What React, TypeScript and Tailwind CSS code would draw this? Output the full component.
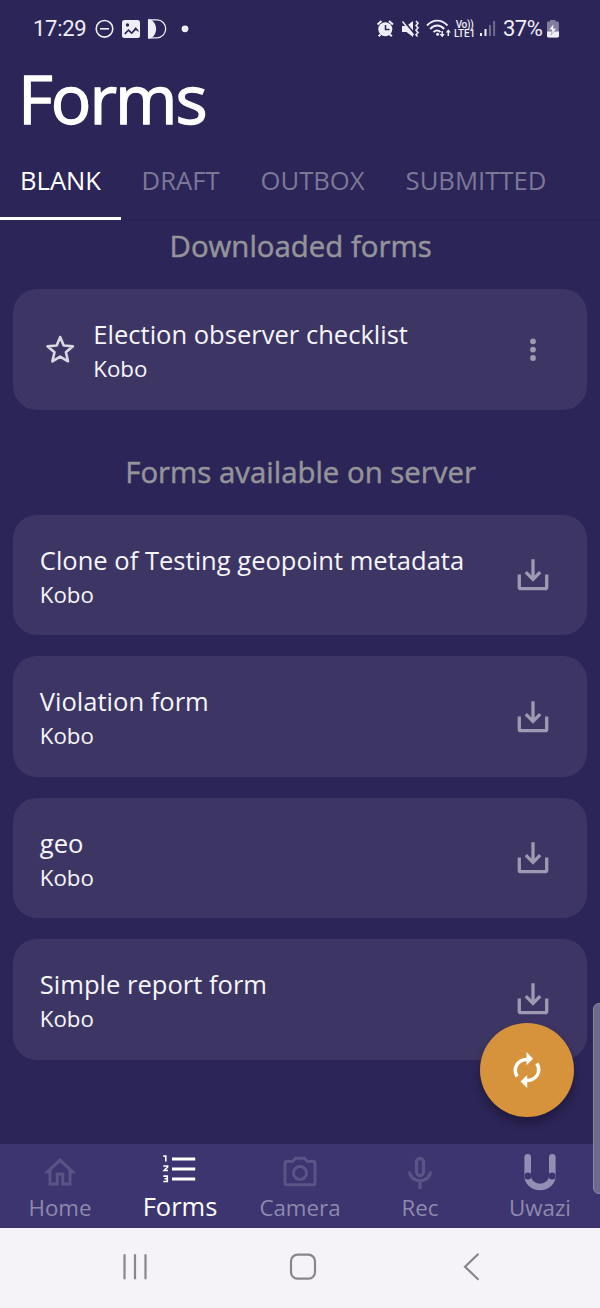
import type { ReactNode } from "react";

const tabs = [
  { label: "BLANK", active: true },
  { label: "DRAFT" },
  { label: "OUTBOX" },
  { label: "SUBMITTED" },
];

const serverForms = ["Clone of Testing geopoint metadata", "Violation form", "geo", "Simple report form"];

function StatusBar() {
  return (
    <div className="flex h-[56px] items-start justify-between pl-[33px] pr-[40px] pt-[17px] font-['Roboto',sans-serif] text-[#efedf6]">
      <div className="flex h-6 items-center">
        <span className="w-[62px] text-[22px] leading-6 tracking-[-0.3px]">17:29</span>
        <svg width="96" height="24" viewBox="95 17 96 24" fill="none">
          <circle cx="104.5" cy="28.8" r="8.3" stroke="#efedf6" strokeWidth="1.6" />
          <path d="M100 28.8h9" stroke="#efedf6" strokeWidth="1.6" />
          <rect x="122" y="20" width="18" height="18" rx="2.5" fill="#efedf6" />
          <path d="M124 33.5l4.5-4.5 3.2 3 4-5 2.8 3.6v1.4l-2.6-2-4.2 4.2-3.2-3-3 3.2z" fill="#2c2558" />
          <circle cx="127.5" cy="25" r="1.7" fill="#2c2558" />
          <path d="M148.6 19.8h8.5a8.6 9 0 0 1 0 18h-8.5z" stroke="#efedf6" strokeWidth="1.3" />
          <path d="M148 19.4h2.5c7.5 4 7.5 15 0 19H148z" fill="#efedf6" />
          <circle cx="185" cy="28.8" r="3.4" fill="#efedf6" />
        </svg>
      </div>
      <div className="flex h-6 items-center">
        <svg className="shrink-0" width="76" height="24" viewBox="376 17 76 24" fill="none">
          <circle cx="385.3" cy="29.3" r="7" fill="#efedf6" />
          <path d="M377.5 24.5l4-3.5M393 24.5l-4-3.5M380.5 34.5l-1.8 1.8M390 34.5l1.8 1.8" stroke="#efedf6" strokeWidth="2" />
          <path d="M385.5 25v4.6h4" stroke="#2c2558" strokeWidth="1.5" />
          <path d="M402 26h4.5l6.500-5v16l-6.500-5H402z" fill="#efedf6" />
          <path d="M403 19.8l11 13.5" stroke="#2c2558" strokeWidth="2" />
          <path d="M402.5 21.5l11 13.5" stroke="#efedf6" strokeWidth="1.5" />
          <path d="M416 21l2 2.2-2 2.2 2 2.4-2 2.4 2 2.4-2 2.2 1.5 1.7" stroke="#efedf6" strokeWidth="1.6" />
          <path d="M427 25.5c6-6.5 14.5-6.5 20.5 0M430.2 29c4.2-4.6 9.8-4.6 14 0M433.5 32.2c2.2-2.2 5-2.2 7 0" stroke="#efedf6" strokeWidth="1.9" />
          <circle cx="437.6" cy="34.2" r="1.5" fill="#efedf6" />
          <path d="M442.2 31v4.5M448.3 36v-4.5" stroke="#efedf6" strokeWidth="1.5" />
          <path d="M439.6 34h5.2l-2.6 3.2zM445.8 32.5h5l-2.5-3.3z" fill="#efedf6" />
        </svg>
        <div className="flex w-[27px] shrink-0 flex-col items-center whitespace-nowrap pr-[2px] font-medium">
          <span className="text-[10px] leading-[9px] tracking-[-0.3px]">Vo))</span>
          <span className="text-[10px] leading-[9px] tracking-[-0.2px]">LTE1</span>
        </div>
        <svg width="20" height="24" viewBox="479 17 20 24">
          <path d="M480 33h2v3h-2zM484.5 29h2v7h-2z" fill="#efedf6" />
          <path d="M489 25h1.9v11H489zM493.2 21h1.9v15h-1.9z" fill="#746f92" />
        </svg>
        <span className="w-[47px] pl-[4px] text-[22px] leading-6 tracking-[-0.5px]">37%</span>
        <svg width="14" height="24" viewBox="546 17 14 24">
          <path d="M550 20h5.5v1.5h2q1.4 0 1.4 1.4V36q0 1.4-1.4 1.4H548.4Q547 37.4 547 36V22.9q0-1.4 1.4-1.4H550z" fill="#827d9f" />
          <path d="M547 31.5h12V36q0 1.4-1.4 1.4H548.4Q547 37.4 547 36z" fill="#efedf6" />
          <path d="M553.5 24l-4.5 5.8h3.2l-1.2 5.2 5.5-6.5h-3.2z" fill="#fff" stroke="#827d9f" strokeWidth=".5" />
        </svg>
      </div>
    </div>
  );
}

function DownloadIcon() {
  return (
    <svg width="32" height="32" viewBox="0 0 32 32" fill="none" stroke="#9e9ab1" strokeWidth="3.3">
      <path d="M2.3 15.5v12.7q0 1.5 1.5 1.5h24.4q1.500 0 1.500-1.500V15.500" />
      <path d="M16 .2v20.500M8.800 13.200l7.200 7.200 7.200-7.200" />
    </svg>
  );
}

function Card({ title, leading, action }: { title: string; leading?: ReactNode; action: ReactNode }) {
  return (
    <div className="flex h-[120.5px] shrink-0 items-center rounded-[24px] bg-[#3d3664] pl-[26.5px] pr-[37.5px]">
      {leading}
      <div className="flex grow flex-col whitespace-nowrap pt-[3px]">
        <span className="text-[25.55px] leading-[36px] text-[#f6f5f9]">{title}</span>
        <span className="text-[22.3px] leading-[34px] text-[#f6f5f9]">Kobo</span>
      </div>
      {action}
    </div>
  );
}

function SectionTitle({ children }: { children: ReactNode }) {
  return (
    <h2 className="h-[53px] pl-[1.5px] text-center text-[29.4px] leading-[53px] whitespace-nowrap text-[#949499] [-webkit-text-stroke:0.5px_#949499]">
      {children}
    </h2>
  );
}

function NavItem({ label, active, children }: { label: string; active?: boolean; children: ReactNode }) {
  return (
    <div className="flex w-[120px] flex-col items-center pt-[8px]">
      <svg width="40" height="40" viewBox="0 0 40 40" fill="none">
        {children}
      </svg>
      <span className={active ? "text-[25.5px] leading-[29px] text-white" : "text-[22.3px] leading-[32px] text-[#8e89ae]"}>{label}</span>
    </div>
  );
}

export default function App() {
  return (
    <div className="relative flex h-[1308px] w-[600px] flex-col overflow-hidden bg-[#2c2558] font-['Open_Sans','Noto_Sans',sans-serif]">
      <StatusBar />
      <h1 className="h-[84px] pl-[18px] text-[67.5px] leading-[84px] tracking-[-2px] text-white [-webkit-text-stroke:1.3px_#fff]">Forms</h1>
      <div className="flex h-[80px] shrink-0 border-b border-[#272050] whitespace-nowrap">
        {tabs.map((t) => (
          <div
            key={t.label}
            className={
              t.active
                ? "h-[80px] border-b-[3.5px] border-white px-[20px] text-[25.6px] leading-[82px] text-white"
                : "h-[79px] px-[20.5px] text-[25.65px] leading-[82px] text-[#7d7898]"
            }
          >
            {t.label}
          </div>
        ))}
      </div>
      <main className="flex grow flex-col pr-[13.5px] pl-[13.3px]">
        <SectionTitle>Downloaded forms</SectionTitle>
        <div className="mt-[16.4px] mb-[36px] flex flex-col">
          <Card
            title="Election observer checklist"
            leading={
              <svg className="mr-[13.5px] ml-[4px] shrink-0" width="36" height="36" viewBox="0 0 36 36" fill="none">
                <path d="M16.2 5l3.5 8.5 9.2.8-7 6 2.1 9-7.8-4.7-7.8 4.7 2.1-9-7-6 9.2-.8z" stroke="#d9d7e3" strokeWidth="2.6" strokeLinejoin="round" />
              </svg>
            }
            action={
              <svg width="32" height="32" viewBox="0 0 32 32" fill="#9e9ab1">
                <circle cx="16" cy="7.3" r="2.9" />
                <circle cx="16" cy="15.6" r="2.9" />
                <circle cx="16" cy="24" r="2.9" />
              </svg>
            }
          />
        </div>
        <SectionTitle>Forms available on server</SectionTitle>
        <div className="mt-[16.1px] flex flex-col gap-[20.9px]">
          {serverForms.map((f) => (
            <Card key={f} title={f} action={<DownloadIcon />} />
          ))}
        </div>
      </main>
      <nav className="flex h-[83.5px] shrink-0 bg-[#3c356f]">
        <NavItem label="Home">
          <g transform="translate(0 1.5)">
            <path d="M7.5 18.2H10V30.5h7.2V20.5h5.6v10H30V18.2h2.5L20 6.6z" stroke="#5a5386" strokeWidth="3" />
          </g>
        </NavItem>
        <NavItem label="Forms" active>
          <path d="M12 6.9h23.2M12 16.9h23.2M12 26.9h23.2" stroke="#fff" strokeWidth="3" />
          <path d="M3.3 4.1h2.5v5.4M3.3 14h4.3v1l-3.4 3.5h3.8M3.3 24.1h4v5.4h-4M4.5 26.8h3" stroke="#fff" strokeWidth="1.6" />
        </NavItem>
        <NavItem label="Camera">
          <path d="M6.5 9.5h6l3-3.3h9l3 3.3h6q1.5 0 1.5 1.5v20.2q0 1.5-1.5 1.5h-27Q5 32.7 5 31.2V11q0-1.5 1.5-1.5z" stroke="#5a5386" strokeWidth="3" />
          <circle cx="20" cy="21" r="6.5" stroke="#5a5386" strokeWidth="3" />
        </NavItem>
        <NavItem label="Rec">
          <rect x="16.5" y="6.5" width="7" height="17" rx="3.5" stroke="#5a5386" strokeWidth="3.3" />
          <path d="M9.7 19.5a10.3 9.3 0 0 0 20.6 0M20 29v8" stroke="#5a5386" strokeWidth="3.3" />
        </NavItem>
        <NavItem label="Uwazi">
          <path d="M7.7 5.2v19M32.3 5.2v19" stroke="#938eb3" strokeWidth="6.6" strokeLinecap="round" />
          <path d="M7.700 24a12.300 11 0 0 0 24.600 0" stroke="#938eb3" strokeWidth="6.6" />
          <circle cx="7.9" cy="24" r="3.5" fill="#3c356f" />
          <circle cx="32.1" cy="24" r="3.5" fill="#3c356f" />
        </NavItem>
      </nav>
      <div className="flex h-[80.5px] shrink-0 items-start bg-[#f5f3f7] pt-[18px]">
        <svg width="600" height="40" viewBox="0 1245.3 600 40" fill="none" stroke="#88868a" strokeWidth="2.2">
          <path d="M124.5 1253.5v25M135 1253.5v25M145.5 1253.5v25" />
          <rect x="291" y="1254" width="24" height="24" rx="6.5" />
          <path d="M478.5 1253l-13.5 13 13.5 13" />
        </svg>
      </div>
      <div className="absolute top-[1023px] left-[480px] flex size-[93.5px] items-center justify-center rounded-full bg-[#d6933b] shadow-[0_6px_10px_rgba(0,0,0,0.3)]">
        <svg width="40" height="40" viewBox="0 0 40 40" fill="none">
          <path d="M10.2 26.5C5.5 19 10 9.7 20 9.5M29.8 13.5C34.5 21 30 30.3 20 30.5" stroke="#fff" strokeWidth="3.5" />
          <path d="M19.5 2l6.500 6.700-6.500 6.500zM20.200 38l-6.700-6.500 6.700-6.500z" fill="#fff" />
        </svg>
      </div>
      <div className="absolute top-[1003px] left-[593px] h-[190.5px] w-[14px] rounded-[6px] border border-[#8b87a3] bg-[#6e6a8c]" />
    </div>
  );
}
